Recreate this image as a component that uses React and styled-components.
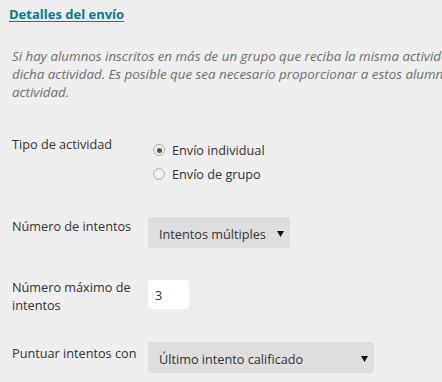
import styled, { createGlobalStyle } from "styled-components";

const GlobalStyle = createGlobalStyle`
  html, body {
    margin: 0;
    padding: 0;
    background: #eeeeee;
  }
  body {
    font-family: "Open Sans", "Liberation Sans", sans-serif;
    font-size: 12.7px;
    color: #333;
  }
`;

function Caret() {
  return (
    <svg width="7" height="7" viewBox="0 0 7 7">
      <path d="M0 1 L7 1 L3.5 7 Z" fill="#111" />
    </svg>
  );
}

function App() {
  return (
    <>
      <GlobalStyle />
      <Page>
        <Heading href="#">Detalles del envío</Heading>
        <Note>
          Si hay alumnos inscritos en más de un grupo que reciba la misma actividad,
          dicha actividad. Es posible que sea necesario proporcionar a estos alumnos
          actividad.
        </Note>

        <Form>
          <Label>Tipo de actividad</Label>
          <Options>
            <Option>
              <Radio $checked />
              Envío individual
            </Option>
            <Option>
              <Radio />
              Envío de grupo
            </Option>
          </Options>

          <Label $top={1}>Número de intentos</Label>
          <Select $width={142} $shift={1}>
            <span>Intentos múltiples</span>
            <Caret />
          </Select>

          <Label>Número máximo de intentos</Label>
          <NumberBox>3</NumberBox>

          <Label $top={0}>Puntuar intentos con</Label>
          <Select $width={226} $shift={-2}>
            <span>Último intento calificado</span>
            <Caret />
          </Select>
        </Form>
      </Page>
    </>
  );
}

const Page = styled.div`
  width: 442px;
  height: 382px;
  overflow: hidden;
  padding: 5px 0 0 9px;
  box-sizing: border-box;
`;

const Heading = styled.a`
  display: inline-block;
  font-weight: 700;
  font-size: 13px;
  line-height: 18px;
  color: #0b7a8b;
  text-decoration: underline;
  text-underline-offset: 2px;
`;

const Note = styled.p`
  margin: 24px 0 0 3px;
  width: 480px;
  font-style: italic;
  font-size: 13.35px;
  line-height: 18px;
  color: #707070;
`;

const Form = styled.div`
  display: grid;
  grid-template-columns: 136px auto;
  justify-content: start;
  align-items: start;
  row-gap: 30px;
  margin: 34px 0 0 3px;
`;

const Label = styled.div`
  width: 132px;
  padding-top: ${(p) => p.$top || 0}px;
  line-height: 18px;
  color: #333;
`;

const Options = styled.div`
  display: flex;
  flex-direction: column;
  padding-top: 3px;
`;

const Option = styled.label`
  display: flex;
  align-items: center;
  gap: 7px;
  height: 24px;
  padding-left: 5px;
  color: #333;
`;

const Radio = styled.span`
  width: 10px;
  height: 10px;
  border-radius: 50%;
  border: 1px solid #b4b4b4;
  background: radial-gradient(circle, #f8f8f8 0%, #e4e4e4 100%);
  box-sizing: content-box;
  position: relative;
  &::after {
    content: "";
    display: ${(p) => (p.$checked ? "block" : "none")};
    position: absolute;
    left: 2.5px;
    top: 2.5px;
    width: 5px;
    height: 5px;
    border-radius: 50%;
    background: #555;
  }
`;

const Select = styled.div`
  width: ${(p) => p.$width}px;
  height: 31px;
  margin-top: ${(p) => p.$shift || 0}px;
  box-sizing: border-box;
  display: flex;
  align-items: center;
  justify-content: space-between;
  padding: 2px 6px 0 11px;
  background: #dedede;
  border-radius: 3px;
  color: #333;
`;

const NumberBox = styled.div`
  width: 41px;
  height: 29px;
  margin-top: 2px;
  box-sizing: border-box;
  display: flex;
  align-items: center;
  padding: 1px 0 0 7px;
  background: #fff;
  border-radius: 3px;
  color: #333;
`;

export default App;
